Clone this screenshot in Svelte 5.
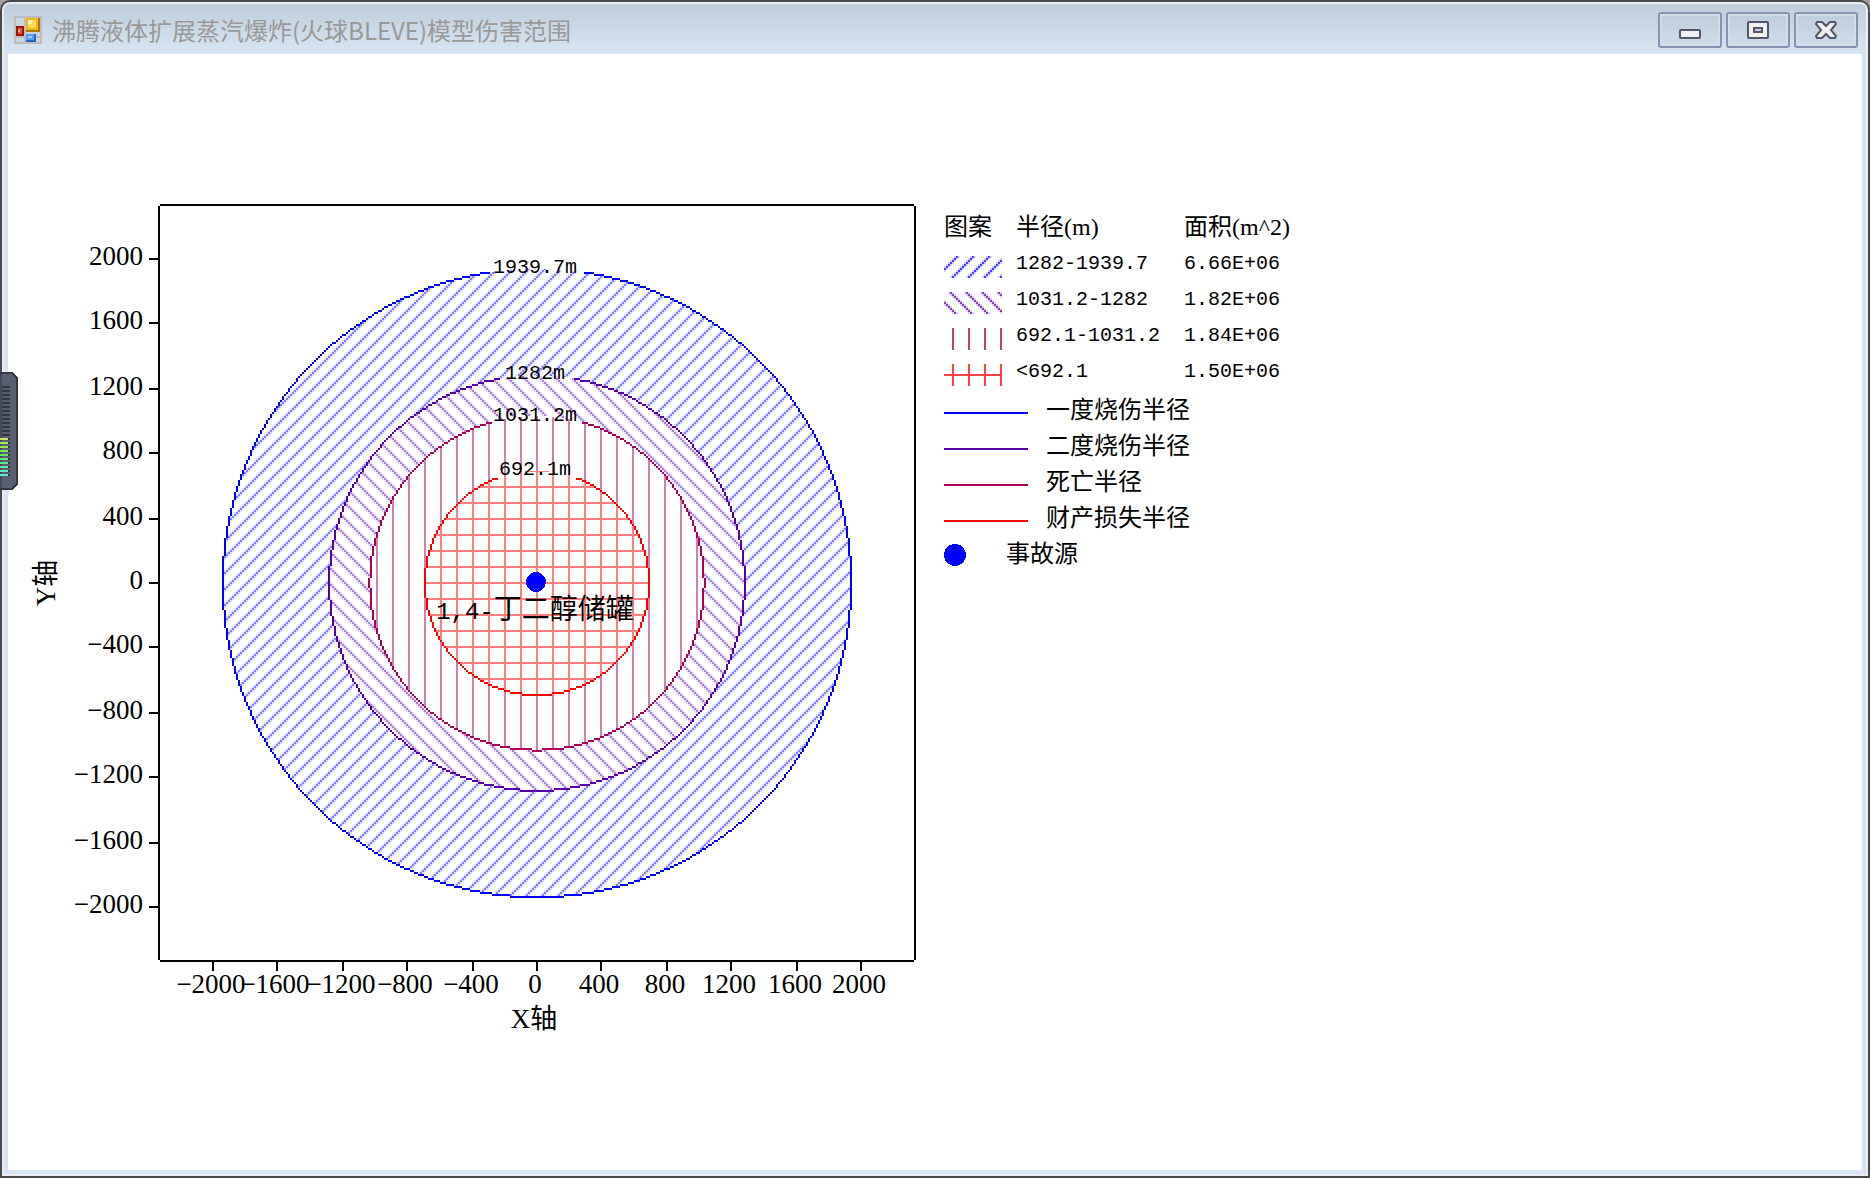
<script lang="ts">
  type Ring = {
    radius: number;
    label: string;
    labelY: number;
    gap: number;
    color: string;
    hatch: string;
    range: string;
    area: string;
  };

  // pixels per metre; one drawing cell is CELL x CELL pixels
  const SCALE = 0.162;
  const CELL = 2;

  const rings: Ring[] = [
    { radius: 1939.7, label: '1939.7m', labelY: -310, gap: 46, color: '#0000ff', hatch: 'up', range: '1282-1939.7', area: '6.66E+06' },
    { radius: 1282, label: '1282m', labelY: -204, gap: 36, color: '#5500aa', hatch: 'down', range: '1031.2-1282', area: '1.82E+06' },
    { radius: 1031.2, label: '1031.2m', labelY: -162, gap: 45, color: '#aa0055', hatch: 'vertical', range: '692.1-1031.2', area: '1.84E+06' },
    { radius: 692.1, label: '692.1m', labelY: -108, gap: 39, color: '#ff0000', hatch: 'cross', range: '<692.1', area: '1.50E+06' }
  ];

  const lines = [
    { text: '一度烧伤半径', color: '#0000ff' },
    { text: '二度烧伤半径', color: '#5500aa' },
    { text: '死亡半径', color: '#aa0055' },
    { text: '财产损失半径', color: '#ff0000' }
  ];

  const ticks = [-2000, -1600, -1200, -800, -400, 0, 400, 800, 1200, 1600, 2000];
  const tickText = (v: number) => String(v).replace('-', '−');
  const tickPos = (v: number) => Math.round((v * SCALE) / CELL) * CELL;

  const cell = (x: number, y: number) =>
    `M${x * CELL - 1} ${y * CELL - 1}h${CELL}v${CELL}h-${CELL}z`;

  // circle outline made of square cells, left open at the top for its label
  function outline(radius: number, gap: number) {
    const r = (radius * SCALE) / CELL;
    let d = '';
    for (let a = 0; a <= Math.ceil(r * Math.SQRT1_2); a++) {
      const b = Math.round(Math.sqrt(r * r - a * a));
      for (const [x, y] of [[a, b], [b, a]]) {
        for (const sx of [-1, 1]) {
          d += cell(sx * x, y);
          if (x * CELL > gap) d += cell(sx * x, -y);
        }
      }
    }
    return d;
  }

  // one 8 x 8 tile of a diagonal hatch
  function diagonal(dir: number, shift: number) {
    let d = '';
    for (let i = 0; i < 8; i++) {
      const x = (((dir * i + shift) % 8) + 8) % 8;
      d += `M${x * CELL} ${i * CELL}h${CELL}v${CELL}h-${CELL}z`;
    }
    return d;
  }

  const meter = Array.from({ length: 23 }, (_, i) => ({
    y: 14 + i * 4,
    color: i < 13 ? '#343743' : `hsl(${75 + (i - 13) * 11} 75% 64%)`,
    lit: i >= 13
  }));
</script>

<div class="window">
  <header class="titlebar">
    <svg class="app-icon" width="28" height="28" viewBox="0 0 28 28" shape-rendering="crispEdges">
      <path d="M1 1h26v26H1zM1 11h26M11 1v26M1 21h26" fill="#ccd6df" stroke="#bdbdc0" stroke-width="2" />
      <rect x="12" y="2" width="14" height="14" fill="#a87808" />
      <rect x="12" y="2" width="12" height="12" fill="#f0b61c" />
      <rect x="14" y="4" width="8" height="8" fill="#fbd65c" />
      <rect x="14" y="4" width="4" height="4" fill="#fff0b8" />
      <rect x="2" y="10" width="8" height="10" fill="#a01408" />
      <rect x="4" y="12" width="4" height="6" fill="#e05844" />
      <rect x="4" y="14" width="2" height="2" fill="#ffb0a0" />
      <rect x="12" y="18" width="10" height="8" fill="#2c62c8" />
      <rect x="12" y="18" width="8" height="6" fill="#5c9cf0" />
      <rect x="14" y="20" width="4" height="2" fill="#a4ccff" />
    </svg>
    <h1>沸腾液体扩展蒸汽爆炸(火球BLEVE)模型伤害范围</h1>
    <div class="controls">
      <button type="button" aria-label="最小化">
        <svg width="22" height="18" viewBox="0 0 22 18">
          <rect x="1" y="9" width="20" height="8" rx="1" class="glyph" />
        </svg>
      </button>
      <button type="button" aria-label="最大化">
        <svg width="22" height="18" viewBox="0 0 22 18">
          <rect x="1" y="1" width="20" height="16" rx="1" class="glyph" />
          <rect x="7" y="7" width="8" height="4" fill="#c3cfdd" stroke="#53566a" stroke-width="2" />
        </svg>
      </button>
      <button type="button" aria-label="关闭">
        <svg width="22" height="18" viewBox="0 0 22 18">
          <path d="M2 1h5l4 4 4-4h5l1 2-5 6 5 6-1 2h-5l-4-4-4 4H2l-1-2 5-6-5-6z" class="glyph" />
        </svg>
      </button>
    </div>
  </header>

  <main>
    <svg class="plot" width="904" height="846" viewBox="-513 -383 904 846" role="img" aria-label="模型伤害范围">
      <defs>
        <pattern id="up" x="-1" y="-1" width="16" height="16" patternUnits="userSpaceOnUse">
          <path d={diagonal(-1, 7)} fill="#0000ff" />
          <path d={diagonal(-1, 6) + diagonal(-1, 8)} fill="#0000ff" fill-opacity="0.25" />
        </pattern>
        <pattern id="down" x="-1" y="-1" width="16" height="16" patternUnits="userSpaceOnUse">
          <path d={diagonal(1, 0)} fill="#5500aa" />
          <path d={diagonal(1, -1) + diagonal(1, 1)} fill="#5500aa" fill-opacity="0.25" />
        </pattern>
        <pattern id="vertical" x="-1" y="-1" width="16" height="16" patternUnits="userSpaceOnUse">
          <path d="M0 0h2v16H0z" fill="#aa0055" />
        </pattern>
        <pattern id="cross" x="-1" y="-1" width="16" height="16" patternUnits="userSpaceOnUse">
          <path d="M0 0h16v2H2v14H0z" fill="#ff0000" />
        </pattern>
      </defs>

      <g shape-rendering="crispEdges">
        {#each rings as ring}
          <circle r={ring.radius * SCALE} fill="#fff" />
          <circle r={ring.radius * SCALE} fill="url(#{ring.hatch})" fill-opacity="0.5" />
          <path d={outline(ring.radius, ring.gap)} fill={ring.color} />
        {/each}
        <circle cx="-1" cy="-1" r="10" fill="#0000ff" />
        <path d="M-377 -378H377M-378 -377V377M-377 378H377M378 -377V377" class="axis" />
        {#each ticks as t}
          <path d="M-388 {-tickPos(t)}h10M{tickPos(t)} 378v10" class="axis" />
        {/each}
      </g>

      {#each ticks as t}
        <text class="big" x="-394" y={-tickPos(t) + 6} text-anchor="end">{tickText(t)}</text>
        <text class="big" x={tickPos(t) - 2} y="410" text-anchor="middle">{tickText(t)}</text>
      {/each}
      {#each rings as ring}
        <text class="mono" x="-2" y={ring.labelY} text-anchor="middle">{ring.label}</text>
      {/each}
      <text class="source-name" x="-2" y="36" text-anchor="middle"><tspan class="prefix">1,4-</tspan>丁二醇储罐</text>
      <text class="big" x="-3" y="445" text-anchor="middle">X轴</text>
      <text class="big" transform="translate(-482 0) rotate(-90)" text-anchor="middle">Y轴</text>
    </svg>

    <section class="legend">
      <table>
        <thead>
          <tr><th class="swatch">图案</th><th class="range">半径(m)</th><th>面积(m^2)</th></tr>
        </thead>
        <tbody>
          {#each rings as ring, i}
            <tr>
              <td>
                <!-- shares the plot's coordinates so that the hatches line up -->
                <svg width="58" height="36" viewBox="407 {i * 36 - 337} 58 36" shape-rendering="crispEdges">
                  <rect x="407" y={i * 36 - 327} width="58" height="22" fill="url(#{ring.hatch})" fill-opacity="0.75" />
                </svg>
              </td>
              <td class="mono">{ring.range}</td>
              <td class="mono">{ring.area}</td>
            </tr>
          {/each}
        </tbody>
      </table>
      <ul>
        {#each lines as line}
          <li>
            <svg width="84" height="36" shape-rendering="crispEdges">
              <path d="M0 23h84" stroke={line.color} stroke-width="2" />
            </svg>
            {line.text}
          </li>
        {/each}
        <li class="source">
          <svg width="22" height="36" shape-rendering="crispEdges">
            <circle cx="11" cy="21" r="11" fill="#0000ff" />
          </svg>
          事故源
        </li>
      </ul>
    </section>
  </main>

  <svg class="meter" width="20" height="118" shape-rendering="crispEdges" aria-hidden="true">
    <path d="M0 0h12l6 6v106l-6 6H0z" fill="#353844" />
    <path d="M0 2h11l5 5v104l-5 5H0z" fill="#5a5f70" />
    <path d="M0 2h2v114H0z" fill="#454858" />
    {#each meter as bar}
      {#if bar.lit}
        <rect x="8" y={bar.y} width="2" height="2" fill="#343743" />
        <rect y={bar.y} width="8" height="2" fill={bar.color} />
      {:else}
        <rect x="2" y={bar.y} width="8" height="2" fill={bar.color} />
      {/if}
    {/each}
  </svg>
</div>

<style>
  :global(body) {
    margin: 0;
    background: #a0a0a0;
  }
  .window {
    position: relative;
    display: flex;
    flex-direction: column;
    box-sizing: border-box;
    min-height: 100vh;
    padding: 0 6px 6px;
    border: 2px solid #4a4848;
    border-radius: 10px 10px 0 0;
    background: #d8e4f1;
    box-shadow: inset 0 0 0 2px #e9eef5;
    font-family: 'Liberation Serif', 'Noto Sans CJK SC', serif;
    font-size: 24px;
    color: #000;
  }
  .titlebar {
    display: flex;
    align-items: center;
    height: 50px;
    margin: 2px -4px 0;
    padding: 2px 8px 0 10px;
    box-sizing: border-box;
    border-radius: 6px 6px 0 0;
    background: linear-gradient(#bfccd9, #d8e5f2);
  }
  h1 {
    margin: 0 0 0 10px;
    font: 400 24px/36px 'Noto Sans CJK SC', sans-serif;
    color: #999;
  }
  .controls {
    display: flex;
    gap: 4px;
    margin-left: auto;
  }
  button {
    display: flex;
    align-items: center;
    justify-content: center;
    width: 64px;
    height: 36px;
    padding: 0;
    border: 2px solid #8793b0;
    border-radius: 3px;
    background: linear-gradient(#bfccda, #cfdcea);
    box-shadow: inset 0 0 0 2px #d3deea;
  }
  .glyph {
    fill: #f0f0f0;
    stroke: #53566a;
    stroke-width: 2;
  }
  main {
    display: flex;
    flex: 1;
    align-items: flex-start;
    gap: 16px;
    padding: 146px 16px 0;
    background: #fff;
  }
  .plot {
    flex: none;
  }
  .axis {
    fill: none;
    stroke: #000;
    stroke-width: 2;
  }
  .big {
    font-size: 27px;
  }
  .source-name {
    font-size: 28px;
  }
  .mono {
    font-family: 'Liberation Mono', monospace;
    font-size: 20px;
  }
  .prefix {
    font-family: 'Liberation Mono', monospace;
    font-size: 24px;
  }
  .legend {
    margin-top: 8px;
    line-height: 36px;
    white-space: nowrap;
  }
  .legend svg {
    display: block;
  }
  table {
    border-collapse: collapse;
  }
  th {
    height: 38px;
    padding: 0;
    font-weight: 400;
    line-height: 24px;
    text-align: left;
  }
  td {
    height: 36px;
    padding: 0;
  }
  .swatch {
    width: 72px;
  }
  .range {
    width: 168px;
  }
  ul {
    margin: 0;
    padding: 0;
    list-style: none;
  }
  li {
    display: flex;
    gap: 18px;
    height: 36px;
    line-height: 40px;
  }
  .source {
    gap: 40px;
  }
  .meter {
    position: absolute;
    top: 370px;
    left: -2px;
  }
</style>
